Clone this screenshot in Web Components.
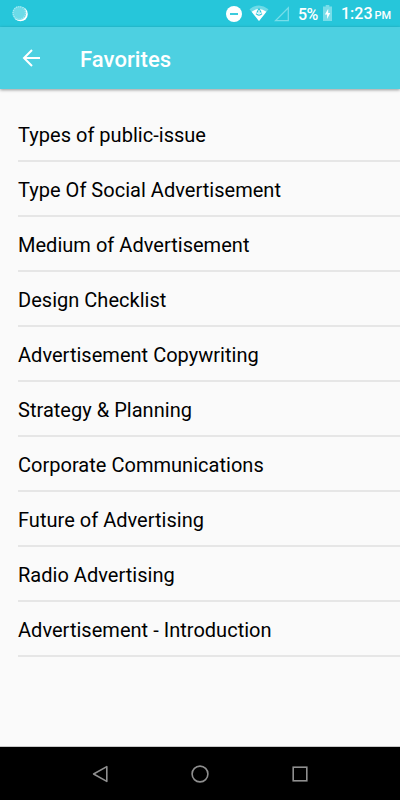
<!DOCTYPE html>
<html lang="en">
<head>
<meta charset="utf-8">
<meta name="viewport" content="width=device-width, initial-scale=1">
<title>Favorites</title>
<style>
  html, body {
    height: 100%;
    margin: 0;
  }
  body {
    font-family: Roboto, sans-serif;
    background: #fafafa;
    overflow: hidden;
    --primary: #4dd0e1;
    --primary-dark: #26c6da;
  }
</style>
</head>
<body>
<favorites-app></favorites-app>

<script>
class StatusBar extends HTMLElement {
  constructor() {
    super();
    this.attachShadow({ mode: 'open' });
    this.shadowRoot.innerHTML = `
      <style>
        :host {
          display: flex;
          align-items: center;
          height: 27px;
          box-sizing: border-box;
          padding: 0 8px 0 11px;
          background: var(--primary-dark);
          color: #fff;
          font-size: 16px;
          font-weight: 500;
          line-height: 20px;
          white-space: nowrap;
        }
        svg { display: block; flex: none; }
        .spacer { flex: 1; }
        .dnd { margin-right: 7px; }
        .wifi { margin-right: 5px; }
        .signal { margin-right: 8px; }
        .level, .time { padding-top: 2px; }
        .level { width: 21px; margin-right: 4px; letter-spacing: -0.5px; }
        .battery { margin-right: 9px; }
        .time { width: 51px; }
        .time small { font-size: 11px; margin-left: 2px; }
      </style>
      <svg width="18" height="18" viewBox="0 0 18 18">
        <circle cx="9.5" cy="9" r="7.3" fill="#fff"/>
        <circle cx="8.3" cy="8" r="7" fill="#6cdbe8"/>
        <circle cx="8.3" cy="8" r="6.2" fill="none" stroke="#a6eaf2" stroke-width="1.3" stroke-dasharray="1 1.1"/>
      </svg>
      <span class="spacer"></span>
      <svg class="dnd" width="16" height="16" viewBox="0 0 16 16">
        <circle cx="8" cy="8" r="8" fill="#fff"/>
        <path d="M4 8h8" stroke="#26c6da" stroke-width="1.8"/>
      </svg>
      <svg class="wifi" width="20" height="17" viewBox="0 0 20 17">
        <path d="M.5 4.200Q10-3.200 19.500 4.200L10 16Z" fill="#6edae7"/>
        <path d="M2.600 6.800Q10 1.200 17.400 6.800L10 16Z" fill="#fff"/>
        <path d="M10 2.800 7.200 7.600h5.600Z" fill="#26c6da"/>
        <path d="M10 4.500v4.500M7 8.600q3 3.200 6 0" fill="none" stroke="#26c6da" stroke-width="1.200"/>
        <path d="M10 5.200v4" stroke="#fff" stroke-width="1.400"/>
      </svg>
      <svg class="signal" width="16" height="16" viewBox="0 0 16 16">
        <path d="M14.300 1.800v12.800H1.600Z" fill="none" stroke="#77dde9" stroke-width="1.300"/>
      </svg>
      <span class="level">5%</span>
      <svg class="battery" width="9" height="17" viewBox="0 0 9 17">
        <path d="M2.700 0h3.600v1.600H9V16H0V1.600h2.700Z" fill="#78dde9"/>
        <path d="M5.200 3.800 1.900 9.600h2.200v4.300L7.200 8H5.200Z" fill="#fff"/>
      </svg>
      <span class="time">1:23<small>PM</small></span>
    `;
  }
}

class AppBar extends HTMLElement {
  constructor() {
    super();
    this.attachShadow({ mode: 'open' });
    this.shadowRoot.innerHTML = `
      <style>
        :host {
          display: flex;
          align-items: center;
          height: 62px;
          box-sizing: border-box;
          padding-left: 22px;
          background: var(--primary);
          color: #fff;
          box-shadow: 0 1px 3px rgba(0, 0, 0, 0.4);
        }
        svg { display: block; margin-right: 40px; }
        h1 {
          margin: 3px 0 0;
          font-size: 22px;
          font-weight: 500;
          line-height: 28px;
          letter-spacing: 0.08px;
        }
      </style>
      <svg width="18" height="18" viewBox="0 0 18 18" fill="none" stroke="#fff" stroke-width="2">
        <path d="M18 9H2M10 1 2 9l8 8"/>
      </svg>
      <h1><slot></slot></h1>
    `;
  }
}

class ListItem extends HTMLElement {
  constructor() {
    super();
    this.attachShadow({ mode: 'open' });
    this.shadowRoot.innerHTML = `
      <style>
        :host {
          display: block;
          height: 55px;
          box-sizing: border-box;
          border-bottom: 2px solid #e6e6e6;
          color: #000;
          font-size: 20px;
          line-height: 56px;
          letter-spacing: 0.025px;
          white-space: nowrap;
        }
      </style>
      <slot></slot>
    `;
  }
}

class NavBar extends HTMLElement {
  constructor() {
    super();
    this.attachShadow({ mode: 'open' });
    this.shadowRoot.innerHTML = `
      <style>
        :host {
          display: flex;
          justify-content: center;
          align-items: center;
          gap: 80px;
          height: 54px;
          box-sizing: border-box;
          border-top: 1px solid #c8c8c8;
          background: #000;
        }
        svg { display: block; fill: none; stroke: #8f8f8f; stroke-width: 1.6; }
      </style>
      <svg width="20" height="20" viewBox="0 0 20 20"><path d="M16.800 2.600v14.800L3.600 10Z" stroke-linejoin="round"/></svg>
      <svg width="20" height="20" viewBox="0 0 20 20"><circle cx="10" cy="10" r="7.900"/></svg>
      <svg width="20" height="20" viewBox="0 0 20 20"><rect x="3.200" y="3.200" width="13.600" height="13.600"/></svg>
    `;
  }
}

class FavoritesApp extends HTMLElement {
  constructor() {
    super();
    this.attachShadow({ mode: 'open' });
    this.favorites = [
      'Types of public-issue',
      'Type Of Social Advertisement',
      'Medium of Advertisement',
      'Design Checklist',
      'Advertisement Copywriting',
      'Strategy & Planning',
      'Corporate Communications',
      'Future of Advertising',
      'Radio Advertising',
      'Advertisement - Introduction'
    ];
    this.render();
  }

  render() {
    this.shadowRoot.innerHTML = `
      <style>
        :host {
          display: flex;
          flex-direction: column;
          height: 100vh;
        }
        main {
          flex: 1;
          padding: 18px 0 0 18px;
        }
      </style>
      <status-bar></status-bar>
      <app-bar>Favorites</app-bar>
      <main></main>
      <nav-bar></nav-bar>
    `;

    const main = this.shadowRoot.querySelector('main');
    this.favorites.forEach(title => {
      const item = document.createElement('list-item');
      item.textContent = title;
      main.appendChild(item);
    });
  }
}

customElements.define('status-bar', StatusBar);
customElements.define('app-bar', AppBar);
customElements.define('list-item', ListItem);
customElements.define('nav-bar', NavBar);
customElements.define('favorites-app', FavoritesApp);
</script>
</body>
</html>
